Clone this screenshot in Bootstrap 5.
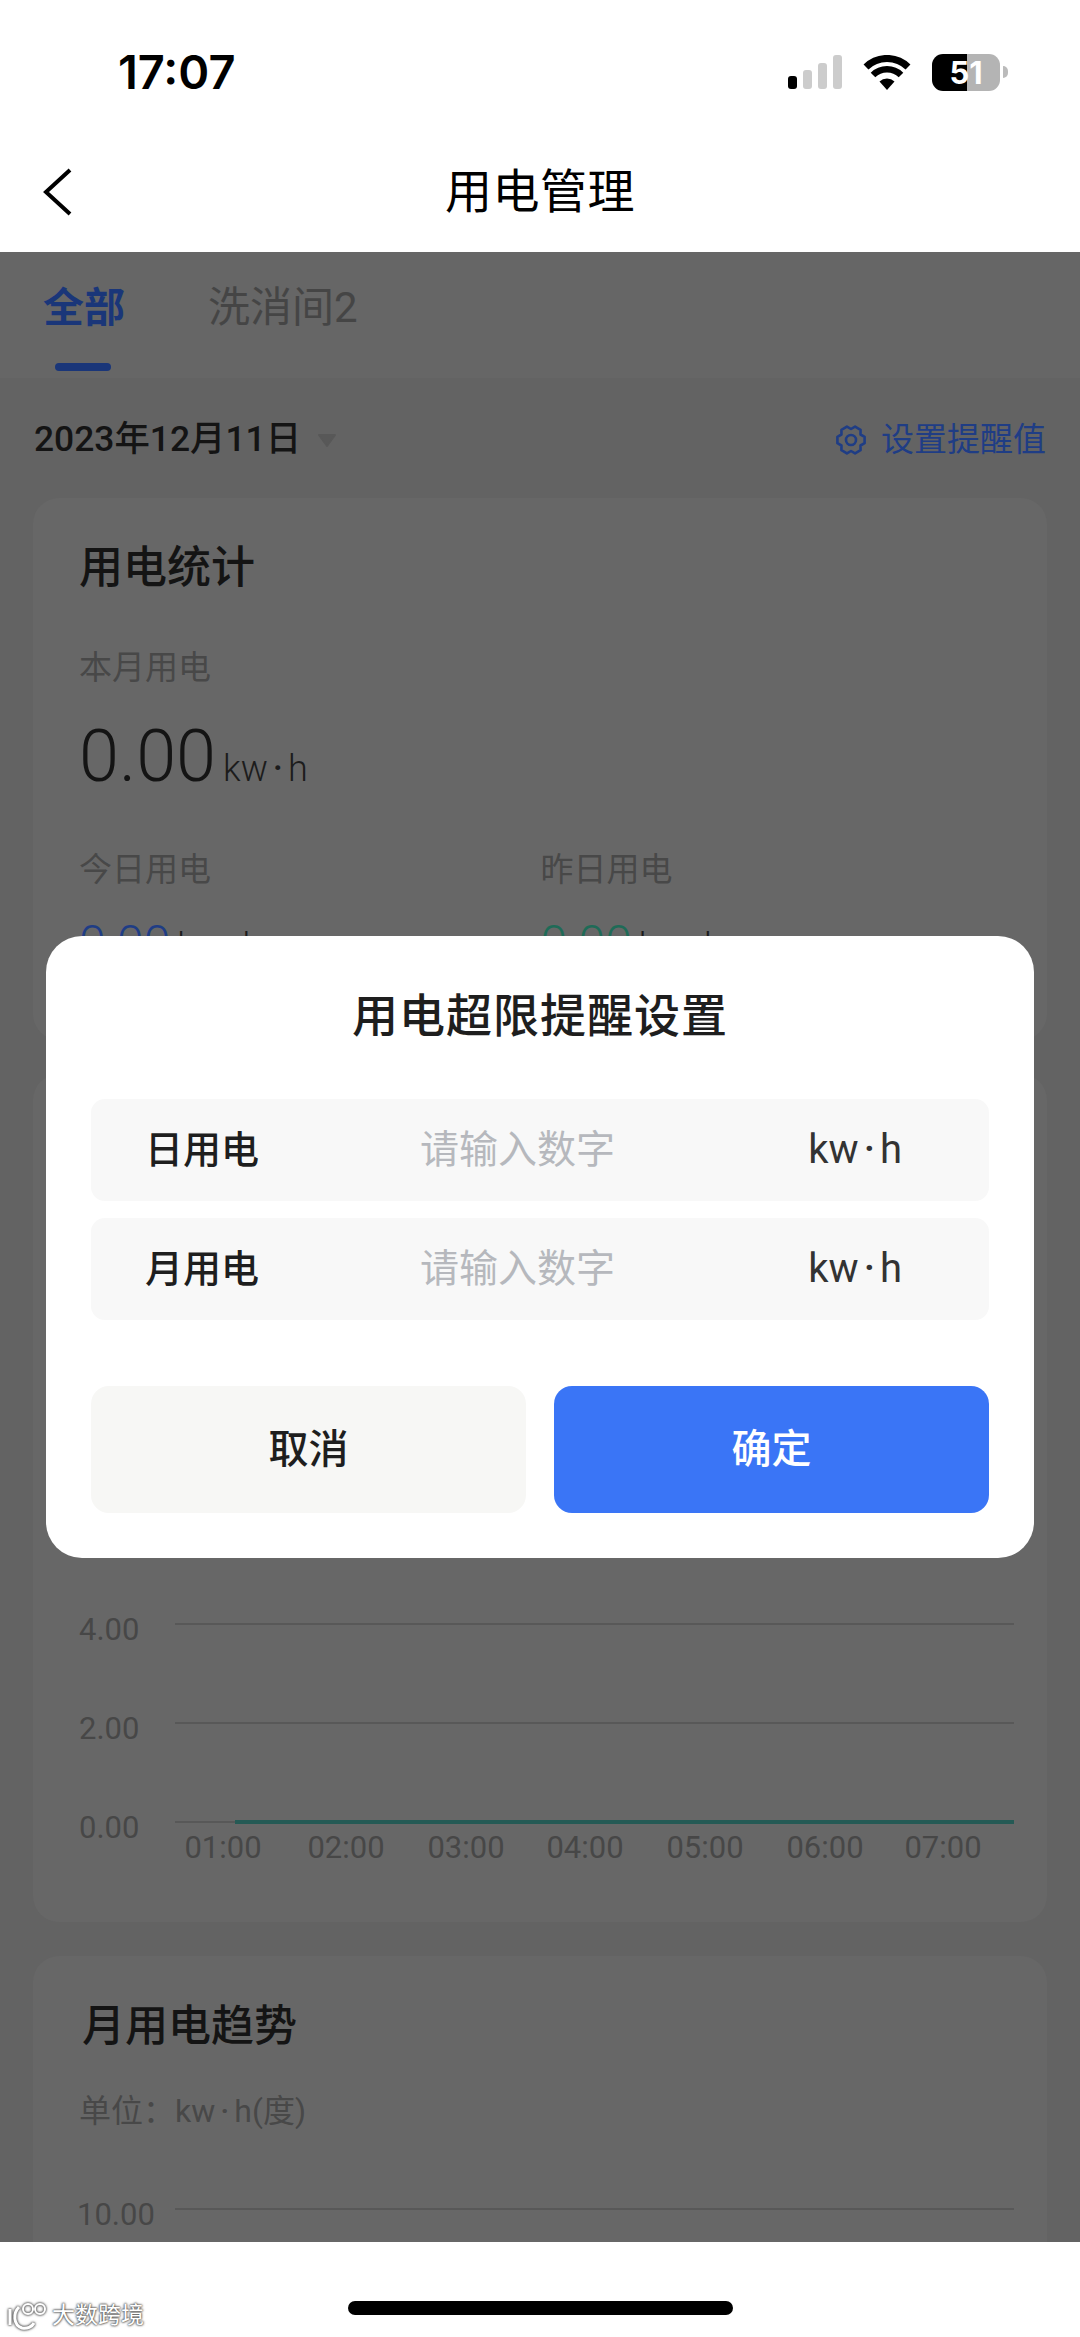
<!DOCTYPE html>
<html lang="zh-CN">
<head>
    <meta charset="UTF-8">
    <meta name="viewport" content="width=device-width, initial-scale=1.0">
    <title>用电管理</title>
    <link href="https://cdn.jsdelivr.net/npm/bootstrap@5.3.3/dist/css/bootstrap.min.css" rel="stylesheet">
    <style>
        body { font-family: Roboto, "Noto Sans CJK SC", sans-serif; background: #fff; color: #141414; }
        .phone { width: 1080px; height: 2337px; overflow: hidden; }

        .status-bar { height: 132px; padding: 48px 72px 0 118px; }
        .clock { font: 600 47px/48px Inter, sans-serif; color: #000; }
        .status-icons { gap: 21px; height: 48px; }
        .batt { width: 68px; height: 37px; border-radius: 11px; background: linear-gradient(90deg, #000 35px, #b4b4b4 35px); color: #fff; font: 700 31px/37px Inter, sans-serif; text-align: center; }
        .batt-cap { width: 5px; height: 12px; border-radius: 0 6px 6px 0; background: #bbb; margin-left: 3px; }

        .top-nav { height: 120px; padding-left: 43px; }
        .back-btn { width: 32px; }
        .top-title { font-size: 47px; letter-spacing: .5px; line-height: 56px; font-weight: 400; color: #000; left: 0; right: 0; }

        /* dimmed page behind the dialog, colours are the ones seen through the scrim */
        .dim-area { height: 1990px; overflow: hidden; background: #636363; }
        .tab-bar { height: 126px; background: #666; padding-left: 43px; gap: 83px; }
        .tab-item { padding-top: 32px; font-size: 42px; line-height: 48px; color: #454545; }
        .tab-item.active { font-size: 41px; font-weight: 700; color: #1a3679; }
        .tab-item.active::after { content: ""; position: absolute; left: 12px; top: 111px; width: 56px; height: 8px; border-radius: 4px; background: #1a3679; }

        .date-row { height: 120px; padding: 4px 34px 0 34px; }
        .date-text { font-size: 35.4px; font-weight: 500; color: #141414; }
        .date-caret { width: 20px; height: 14px; margin-left: 16px; }
        .set-link { font-size: 33px; color: #1f3d85; gap: 14px; }

        .stat-box { margin: 0 33px 34px; background: #676767; border-radius: 26px; border: 0; color: #141414; }
        .stat-box.first { height: 542px; padding: 46px 45px 0 46px; }
        .stat-box.trend { height: 848px; }
        .box-title { font-size: 43px; line-height: 48px; font-weight: 500; margin: 0; }
        .first .box-title { font-size: 44px; }
        .stat-label { font-size: 33px; line-height: 40px; color: #484848; }
        .first-label { margin-top: 56px; }
        .big-num { margin-top: 33px; font-size: 72px; line-height: 72px; font-weight: 300; }
        .sub-stats { margin-top: 45px; }
        .mid-num { margin-top: 25px; font-size: 48px; line-height: 56px; font-weight: 300; }
        .stat-unit { font-size: 36px; margin-left: 7px; color: #1c1c1c; font-weight: 300; }
        .unit-dot { margin: 0 5px; font-weight: 500; }
        .num-blue { color: #1f3d85; }
        .num-green { color: #1f6b57; }
        .trend-head { height: 223px; padding: 46px 46px 0 49px; }
        .trend-unit { font-size: 32px; line-height: 40px; color: #484848; margin: 41px 0 0 -3px; }

        .chart-svg { display: block; }
        .chart-svg text { font-family: Roboto, sans-serif; font-size: 31px; fill: #474747; }
        .grid-line { stroke: #585858; stroke-width: 2; }
        .data-line { stroke: #255a55; stroke-width: 4; }

        .limit-dialog { left: 46px; top: 936px; width: 988px; height: 622px; background: #fff; border-radius: 36px; padding: 56px 45px 44px; color: #1e1e1e; }
        .dialog-title { font-size: 46px; line-height: 48px; font-weight: 500; text-align: center; margin: 0 0 59px; letter-spacing: 1px; }
        .limit-row { height: 102px; background: #f8f8f8; border-radius: 14px; margin-bottom: 17px; padding: 0 87px 0 54px; }
        .limit-label { width: 275px; font-size: 38px; font-weight: 500; }
        .limit-input.form-control { flex: 1; min-width: 0; background: transparent; border: 0; padding: 0; font-size: 39px; box-shadow: none; border-radius: 0; }
        .limit-input::placeholder { color: #b6b8bd; }
        .limit-unit { font-size: 40px; color: #333; }
        .dialog-btns { margin-top: 66px; gap: 28px; }
        .dialog-btn.btn { flex: 1; height: 127px; border: 0; border-radius: 18px; font-size: 40px; font-weight: 500; }
        .btn-cancel.btn { background: #f7f7f5; color: #1e1e1e; }
        .btn-ok.btn { background: #3a75f6; color: #fff; }

        .bottom-bar { height: 95px; }
        .home-pill { width: 385px; height: 14px; border-radius: 7px; background: #000; margin-top: 59px; }
        .wmark { left: 8px; top: 2300px; gap: 4px; font-size: 23px; line-height: 32px; color: #fff; text-shadow: 0 0 2px #555, 0 0 2px #555, 0 0 3px #777; }
        .wmark svg { filter: drop-shadow(0 0 1px #555) drop-shadow(0 0 1px #777); }
    </style>
</head>

<body>
    <div class="phone position-relative">
        <div class="status-bar d-flex justify-content-between align-items-start">
            <div class="clock">17:07</div>
            <div class="status-icons d-flex align-items-center">
                <svg width="54" height="34" viewBox="0 0 54 34">
                    <rect x="0" y="21" width="9" height="13" rx="3" fill="#000"/>
                    <rect x="15" y="15" width="9" height="19" rx="3" fill="#ccc"/>
                    <rect x="30" y="8" width="9" height="26" rx="3" fill="#ccc"/>
                    <rect x="45" y="0" width="9" height="34" rx="3" fill="#ccc"/>
                </svg>
                <svg width="48" height="35" viewBox="0 0 48 35">
                    <path d="M24 35 L16.5 26.5 A11 11 0 0 1 31.5 26.5 Z" fill="#000"/>
                    <path d="M10 20 A20 20 0 0 1 38 20" fill="none" stroke="#000" stroke-width="6.5"/>
                    <path d="M3 12 A30 30 0 0 1 45 12" fill="none" stroke="#000" stroke-width="7"/>
                </svg>
                <div class="d-flex align-items-center">
                    <div class="batt">51</div>
                    <div class="batt-cap"></div>
                </div>
            </div>
        </div>

        <div class="top-nav d-flex align-items-center position-relative">
            <a class="back-btn d-block" href="#" aria-label="返回">
                <svg class="d-block" width="30" height="50" viewBox="0 0 30 50"><path d="M27 3 L3 25 L27 47" fill="none" stroke="#000" stroke-width="4"/></svg>
            </a>
            <div class="top-title position-absolute text-center">用电管理</div>
        </div>

        <div class="dim-area">
            <div class="tab-bar d-flex">
                <div class="tab-item active position-relative">全部</div>
                <div class="tab-item">洗消间2</div>
            </div>

            <div class="date-row d-flex justify-content-between align-items-center">
                <div class="d-flex align-items-center">
                    <span class="date-text">2023年12月11日</span>
                    <svg class="date-caret" viewBox="0 0 20 14"><path d="M2 2 H18 L10 13 Z" fill="#585858" stroke="#585858" stroke-width="2" stroke-linejoin="round"/></svg>
                </div>
                <div class="set-link d-flex align-items-center">
                    <svg width="32" height="30" viewBox="0 0 32 30">
                        <path d="M29.6 11.85 V18.15 L25.5 20.5 L25.55 25.24 L20.09 28.39 L16 26 L11.91 28.39 L6.45 25.24 L6.47 20.5 L2.4 18.15 V11.85 L6.47 9.5 L6.45 4.76 L11.91 1.61 L16 4 L20.09 1.61 L25.55 4.76 L25.53 9.5 Z" fill="none" stroke="#1f3d85" stroke-width="2.6" stroke-linejoin="round"/>
                        <circle cx="16" cy="15" r="5" fill="none" stroke="#1f3d85" stroke-width="2.6"/>
                    </svg>
                    <span>设置提醒值</span>
                </div>
            </div>

            <div class="card stat-box first">
                <h5 class="box-title">用电统计</h5>
                <div class="stat-label first-label">本月用电</div>
                <div class="big-num">0.00<span class="stat-unit">kw<span class="unit-dot">·</span>h</span></div>
                <div class="row g-0 sub-stats">
                    <div class="col-6">
                        <div class="stat-label">今日用电</div>
                        <div class="mid-num num-blue">0.00<span class="stat-unit">kw<span class="unit-dot">·</span>h</span></div>
                    </div>
                    <div class="col-6">
                        <div class="stat-label">昨日用电</div>
                        <div class="mid-num num-green">0.00<span class="stat-unit">kw<span class="unit-dot">·</span>h</span></div>
                    </div>
                </div>
            </div>

            <div class="card stat-box trend">
                <div class="trend-head"></div>
                <svg class="chart-svg" data-rows="3,4,5" data-hours="1" width="1014" height="600" viewBox="0 0 1014 600"></svg>
            </div>

            <div class="card stat-box trend">
                <div class="trend-head">
                    <h5 class="box-title">月用电趋势</h5>
                    <div class="trend-unit">单位：kw<span class="unit-dot">·</span>h(度)</div>
                </div>
                <svg class="chart-svg" data-rows="0" data-hours="0" width="1014" height="60" viewBox="0 0 1014 60"></svg>
            </div>
        </div>

        <div class="bottom-bar d-flex justify-content-center">
            <div class="home-pill"></div>
        </div>

        <div class="wmark position-absolute d-flex align-items-center">
            <svg width="40" height="30" viewBox="0 0 40 30">
                <path d="M2 8 V24 M11 6 C5 12 5 24 14 27 C19 28 24 26 26 22" fill="none" stroke="#fff" stroke-width="3"/>
                <circle cx="20" cy="8" r="5" fill="none" stroke="#fff" stroke-width="2"/>
                <circle cx="32" cy="8" r="5" fill="none" stroke="#fff" stroke-width="2"/>
            </svg>
            <span>大数跨境</span>
        </div>

        <div class="limit-dialog position-absolute">
            <h5 class="dialog-title">用电超限提醒设置</h5>
            <div class="limit-row d-flex align-items-center">
                <div class="limit-label">日用电</div>
                <input class="limit-input form-control" type="text" placeholder="请输入数字">
                <div class="limit-unit">kw<span class="unit-dot">·</span>h</div>
            </div>
            <div class="limit-row d-flex align-items-center">
                <div class="limit-label">月用电</div>
                <input class="limit-input form-control" type="text" placeholder="请输入数字">
                <div class="limit-unit">kw<span class="unit-dot">·</span>h</div>
            </div>
            <div class="dialog-btns d-flex">
                <button class="dialog-btn btn btn-cancel">取消</button>
                <button class="dialog-btn btn btn-ok">确定</button>
            </div>
        </div>
    </div>

    <script src="https://cdn.jsdelivr.net/npm/bootstrap@5.3.3/dist/js/bootstrap.bundle.min.js"></script>
    <script>
        const yLabels = ['10.00', '8.00', '6.00', '4.00', '2.00', '0.00'];
        const hours = ['01:00', '02:00', '03:00', '04:00', '05:00', '06:00', '07:00'];
        const hourX = [190, 313, 433, 552, 672, 792, 910];

        // Only the rows that can be seen around the dialog get drawn
        document.querySelectorAll('.chart-svg').forEach(function (svg) {
            let html = '';
            svg.dataset.rows.split(',').forEach(function (row) {
                const label = yLabels[row];
                const y = 30 + row * 99;
                html += `<line class="grid-line" x1="142" y1="${y}" x2="981" y2="${y}"/>`;
                html += `<text x="${label.length > 4 ? 44 : 46}" y="${y + 16}">${label}</text>`;
            });
            if (svg.dataset.hours === '1') {
                hours.forEach(function (hour, i) {
                    html += `<text x="${hourX[i]}" y="561" text-anchor="middle">${hour}</text>`;
                });
                html += '<line class="data-line" x1="202" y1="525" x2="981" y2="525"/>';
            }
            svg.innerHTML = html;
        });
    </script>
</body>
</html>
